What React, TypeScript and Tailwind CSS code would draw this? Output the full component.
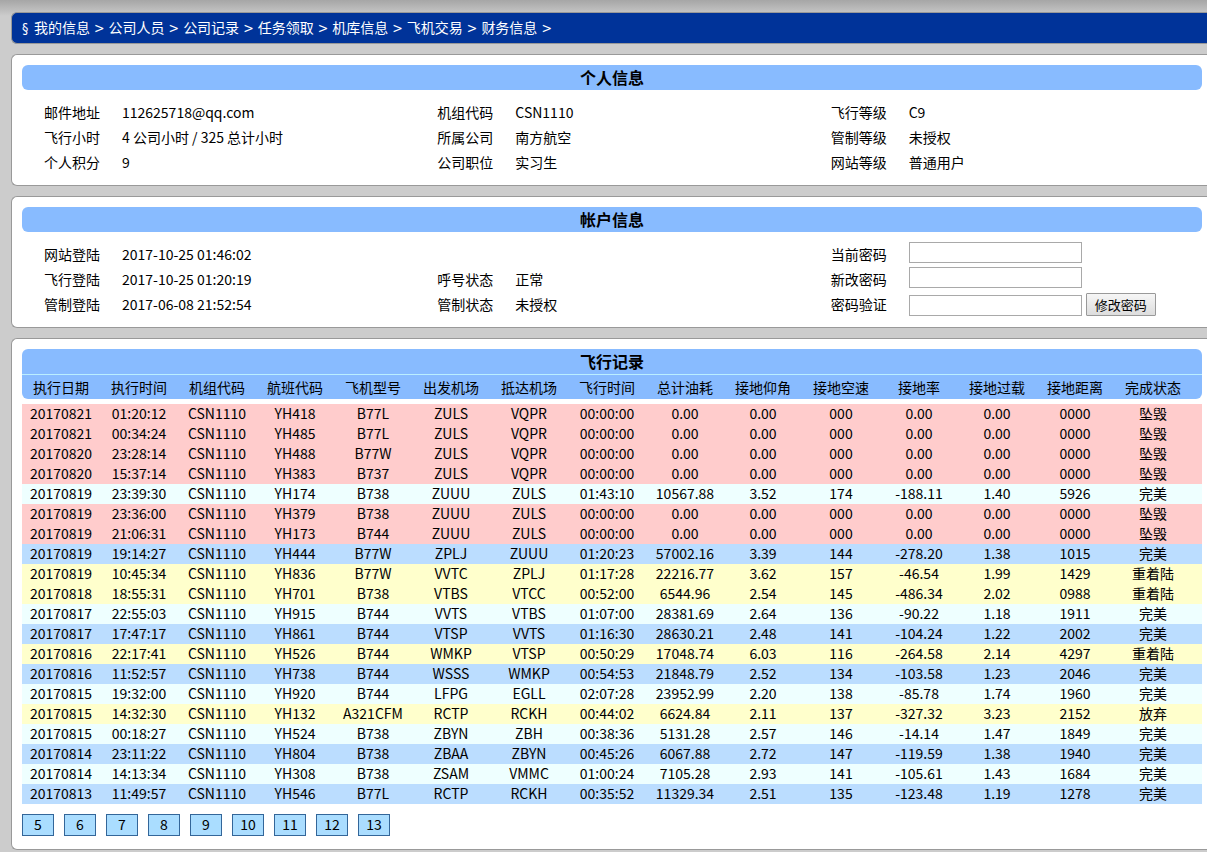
import React from "react";

const navLinks = ["我的信息", "公司人员", "公司记录", "任务领取", "机库信息", "飞机交易", "财务信息"];

const columns = [
  "执行日期", "执行时间", "机组代码", "航班代码", "飞机型号", "出发机场", "抵达机场", "飞行时间",
  "总计油耗", "接地仰角", "接地空速", "接地率", "接地过载", "接地距离", "完成状态",
];

type Tone = "crash" | "warn" | "light" | "blue";

const tones: Record<Tone, string> = {
  crash: "bg-[#ffcccc]",
  warn: "bg-[#ffffcc]",
  light: "bg-[#eeffff]",
  blue: "bg-[#bbddff]",
};

const flights: [Tone, string][] = [
  ["crash", "20170821 01:20:12 CSN1110 YH418 B77L ZULS VQPR 00:00:00 0.00 0.00 000 0.00 0.00 0000 坠毁"],
  ["crash", "20170821 00:34:24 CSN1110 YH485 B77L ZULS VQPR 00:00:00 0.00 0.00 000 0.00 0.00 0000 坠毁"],
  ["crash", "20170820 23:28:14 CSN1110 YH488 B77W ZULS VQPR 00:00:00 0.00 0.00 000 0.00 0.00 0000 坠毁"],
  ["crash", "20170820 15:37:14 CSN1110 YH383 B737 ZULS VQPR 00:00:00 0.00 0.00 000 0.00 0.00 0000 坠毁"],
  ["light", "20170819 23:39:30 CSN1110 YH174 B738 ZUUU ZULS 01:43:10 10567.88 3.52 174 -188.11 1.40 5926 完美"],
  ["crash", "20170819 23:36:00 CSN1110 YH379 B738 ZUUU ZULS 00:00:00 0.00 0.00 000 0.00 0.00 0000 坠毁"],
  ["crash", "20170819 21:06:31 CSN1110 YH173 B744 ZUUU ZULS 00:00:00 0.00 0.00 000 0.00 0.00 0000 坠毁"],
  ["blue", "20170819 19:14:27 CSN1110 YH444 B77W ZPLJ ZUUU 01:20:23 57002.16 3.39 144 -278.20 1.38 1015 完美"],
  ["warn", "20170819 10:45:34 CSN1110 YH836 B77W VVTC ZPLJ 01:17:28 22216.77 3.62 157 -46.54 1.99 1429 重着陆"],
  ["warn", "20170818 18:55:31 CSN1110 YH701 B738 VTBS VTCC 00:52:00 6544.96 2.54 145 -486.34 2.02 0988 重着陆"],
  ["light", "20170817 22:55:03 CSN1110 YH915 B744 VVTS VTBS 01:07:00 28381.69 2.64 136 -90.22 1.18 1911 完美"],
  ["blue", "20170817 17:47:17 CSN1110 YH861 B744 VTSP VVTS 01:16:30 28630.21 2.48 141 -104.24 1.22 2002 完美"],
  ["warn", "20170816 22:17:41 CSN1110 YH526 B744 WMKP VTSP 00:50:29 17048.74 6.03 116 -264.58 2.14 4297 重着陆"],
  ["blue", "20170816 11:52:57 CSN1110 YH738 B744 WSSS WMKP 00:54:53 21848.79 2.52 134 -103.58 1.23 2046 完美"],
  ["light", "20170815 19:32:00 CSN1110 YH920 B744 LFPG EGLL 02:07:28 23952.99 2.20 138 -85.78 1.74 1960 完美"],
  ["warn", "20170815 14:32:30 CSN1110 YH132 A321CFM RCTP RCKH 00:44:02 6624.84 2.11 137 -327.32 3.23 2152 放弃"],
  ["light", "20170815 00:18:27 CSN1110 YH524 B738 ZBYN ZBH 00:38:36 5131.28 2.57 146 -14.14 1.47 1849 完美"],
  ["blue", "20170814 23:11:22 CSN1110 YH804 B738 ZBAA ZBYN 00:45:26 6067.88 2.72 147 -119.59 1.38 1940 完美"],
  ["light", "20170814 14:13:34 CSN1110 YH308 B738 ZSAM VMMC 01:00:24 7105.28 2.93 141 -105.61 1.43 1684 完美"],
  ["blue", "20170813 11:49:57 CSN1110 YH546 B77L RCTP RCKH 00:35:52 11329.34 2.51 135 -123.48 1.19 1278 完美"],
];

const pages = [5, 6, 7, 8, 9, 10, 11, 12, 13];

function Panel({ title, children }: { title: string; children: React.ReactNode }) {
  return (
    <section className="rounded-l-md border border-r-0 border-[#999999] bg-white py-2.5 pr-[5px] pl-2.5">
      <h2 className="mb-2.5 rounded-md bg-[#88bbff] text-center text-base leading-[25px] font-bold">{title}</h2>
      {children}
    </section>
  );
}

function Facts({ items }: { items: [string, string][] }) {
  return (
    <dl className="pl-[22px]">
      {items.map(([label, value]) => (
        <div key={label} className="flex leading-[25px]">
          <dt className="w-[78px] shrink-0">{label}</dt>
          <dd>{value}</dd>
        </div>
      ))}
    </dl>
  );
}

const fieldClass = "h-[21px] w-[173px] border border-[#a9a9a9] bg-white px-1 text-[13px] outline-none";

function PasswordForm() {
  return (
    <form className="pl-[22px] leading-[25px]" onSubmit={(e) => e.preventDefault()}>
      <div className="flex h-[25px] items-start">
        <label htmlFor="current" className="w-[78px] shrink-0">当前密码</label>
        <input id="current" type="password" className={fieldClass} />
      </div>
      <div className="flex h-[25px] items-start">
        <label htmlFor="next" className="w-[78px] shrink-0">新改密码</label>
        <input id="next" type="password" className={fieldClass} />
      </div>
      <div className="flex h-[25px] items-end">
        <label htmlFor="confirm" className="w-[78px] shrink-0">密码验证</label>
        <div className="flex items-end gap-1 pb-px">
          <input id="confirm" type="password" className={fieldClass} />
          <button
            type="submit"
            className="h-[23px] w-[70px] rounded-[1px] border border-[#999999] bg-linear-to-b from-[#f6f6f6] to-[#dddddd] text-[13px] leading-5 whitespace-nowrap"
          >
            修改密码
          </button>
        </div>
      </div>
    </form>
  );
}

export default function App() {
  return (
    <div className="min-h-screen bg-[#cccccc] bg-linear-to-b from-[#a6a6a6] to-[#cccccc] to-[16px] font-['Noto_Sans_CJK_SC',sans-serif] text-sm text-black">
      <div className="flex flex-col gap-2.5 pt-3 pb-0.5 pl-[11px]">
        <nav className="flex h-8 items-center gap-1 rounded-l-md border border-r-0 border-[#999999] bg-[#003399] pl-2.5 font-['DejaVu_Sans_Condensed','Noto_Sans_CJK_SC',sans-serif] whitespace-nowrap text-white">
          <span className="w-2">§</span>
          {navLinks.map((name) => (
            <React.Fragment key={name}>
              <a href="#">{name}</a>
              <span>&gt;</span>
            </React.Fragment>
          ))}
        </nav>

        <Panel title="个人信息">
          <div className="grid grid-cols-3">
            <Facts items={[["邮件地址", "112625718@qq.com"], ["飞行小时", "4 公司小时 / 325 总计小时"], ["个人积分", "9"]]} />
            <Facts items={[["机组代码", "CSN1110"], ["所属公司", "南方航空"], ["公司职位", "实习生"]]} />
            <Facts items={[["飞行等级", "C9"], ["管制等级", "未授权"], ["网站等级", "普通用户"]]} />
          </div>
        </Panel>

        <Panel title="帐户信息">
          <div className="grid grid-cols-3 items-end">
            <Facts items={[["网站登陆", "2017-10-25 01:46:02"], ["飞行登陆", "2017-10-25 01:20:19"], ["管制登陆", "2017-06-08 21:52:54"]]} />
            <Facts items={[["呼号状态", "正常"], ["管制状态", "未授权"]]} />
            <PasswordForm />
          </div>
        </Panel>

        <section className="rounded-l-md border border-r-0 border-[#999999] bg-white pt-2.5 pr-[5px] pb-[13px] pl-2.5">
          <table className="w-full table-fixed border-separate border-spacing-0 text-center">
            <caption className="rounded-t-md bg-[#88bbff] text-base leading-[25px] font-bold">飞行记录</caption>
            <thead>
              <tr>
                {columns.map((name) => (
                  <th
                    key={name}
                    scope="col"
                    className="h-[25px] border-t border-[#bbeeff] bg-[#88bbff] p-0 leading-6 font-normal whitespace-nowrap first:rounded-bl-md last:w-[88px] last:rounded-br-md last:pr-2.5"
                  >
                    {name}
                  </th>
                ))}
              </tr>
            </thead>
            <tbody className="before:block before:h-[5px] before:content-['']">
              {flights.map(([tone, line], row) => (
                <tr key={row} className={tones[tone]}>
                  {line.split(" ").map((cell, i) => (
                    <td key={i} className="h-5 p-0 pb-0.5 leading-[18px] whitespace-nowrap last:pr-2.5">
                      {cell}
                    </td>
                  ))}
                </tr>
              ))}
            </tbody>
          </table>
          <div className="mt-2.5 flex gap-2.5">
            {pages.map((page) => (
              <a
                key={page}
                href="#"
                className="h-[22px] w-8 border border-[#336699] bg-[#aaddff] text-center leading-[18px]"
              >
                {page}
              </a>
            ))}
          </div>
        </section>
      </div>
    </div>
  );
}
